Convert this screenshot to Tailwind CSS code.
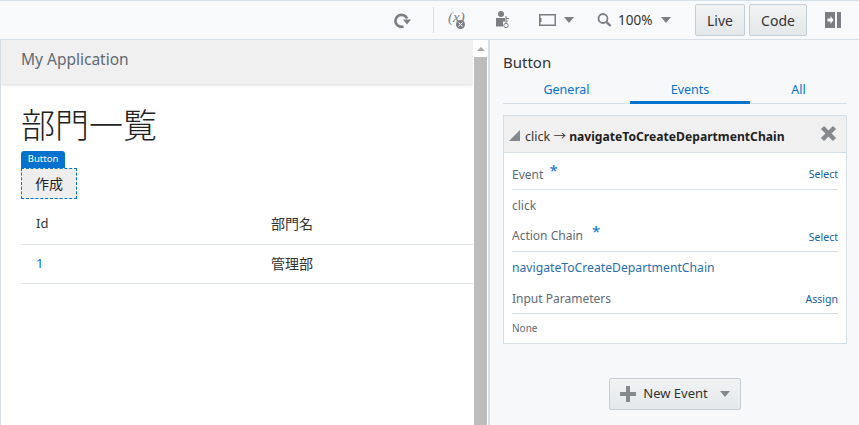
<!DOCTYPE html>
<html lang="en">
<head>
<meta charset="UTF-8" />
<title>Page Designer</title>
<script src="https://cdn.jsdelivr.net/npm/@tailwindcss/browser@4"></script>
</head>
<body class="h-[425px] w-[859px] overflow-hidden bg-white font-['Noto_Sans','Noto_Sans_CJK_JP',sans-serif] text-[#333]">
  <!-- toolbar -->
  <header class="flex h-10 items-center border-y border-t-[#d6e0e8] border-b-[#d6dfe6] bg-[#f8f9fb]">
    <div class="ml-auto flex items-center">
      <svg class="mr-[22px] h-[18px] w-[18px]" viewBox="0 0 18 18" fill="none"><path d="M10.500 15.500A6 6 0 1 1 14 7.500" stroke="#7b7f84" stroke-width="2.600"/><path d="M10 8.500h8l-4 5z" fill="#7b7f84"/></svg>
      <div class="mr-[14px] h-[26px] w-px bg-[#d6dfe6]"></div>
      <svg class="mr-[29px] h-[20px] w-[18px]" viewBox="0 0 18 20" fill="none"><text x="0" y="12" font-size="15" font-style="italic" fill="#7b7f84" font-family="Liberation Serif">(x)</text><circle cx="12.500" cy="14.500" r="4.500" fill="#7b7f84"/><path d="M10.500 12.500l4 4M14.500 12.500l-4 4" stroke="#fff"/></svg>
      <svg class="mr-[28px] h-[20px] w-[16px]" viewBox="0 0 16 20" fill="none"><circle cx="6" cy="4" r="3" fill="#7b7f84"/><path d="M1 8h9v3.500H8v5H1z" fill="#7b7f84"/><circle cx="11" cy="15.500" r="2.200" stroke="#7b7f84"/><path d="M11 13V6M11 8.500h3M11 11h2" stroke="#7b7f84"/></svg>
      <svg class="mr-[8px] h-[14px] w-[17px]" viewBox="0 0 17 14" fill="none"><rect x="0.750" y="1.750" width="15.500" height="10.500" stroke="#7b7f84" stroke-width="1.500"/><path d="M1 5h1.500v4H1z" fill="#7b7f84"/></svg>
      <div class="mr-[23px] h-0 w-0 border-x-[5px] border-t-[6px] border-x-transparent border-t-[#7b7f84]"></div>
      <svg class="mr-[6px] h-[16px] w-[15px]" viewBox="0 0 15 16" fill="none"><circle cx="6" cy="6.500" r="4.500" stroke="#7b7f84" stroke-width="1.800"/><path d="M9.500 10l4 4" stroke="#7b7f84" stroke-width="2.400"/></svg>
      <span class="mr-[10px] w-[33px] pt-[1px] text-[13.500px] leading-none">100%</span>
      <div class="mr-[24px] h-0 w-0 border-x-[5px] border-t-[6px] border-x-transparent border-t-[#7b7f84]"></div>
      <button class="mr-[4px] h-[32px] w-[50px] rounded-[2px] border border-[#c4ced7] bg-gradient-to-b from-[#f1f3f3] to-[#e4e8ea] text-[14px]">Live</button>
      <button class="mr-[18px] h-[32px] w-[58px] rounded-[2px] border border-[#c4ced7] bg-gradient-to-b from-[#f1f3f3] to-[#e4e8ea] text-[14px]">Code</button>
      <svg class="mr-[18px] h-[16px] w-[16px]" viewBox="0 0 16 16"><rect width="10" height="16" fill="#7b7f84"/><rect x="12" width="4" height="16" fill="#7b7f84"/><path d="M2.500 6.500h3V4l3 4-3 4V9.500h-3z" fill="#fff"/></svg>
    </div>
  </header>

  <div class="flex h-[385px]">
    <!-- page preview -->
    <main class="flex w-[490px] border-l border-r-2 border-l-[#d6dfe6] border-r-[#d6dfe6]">
      <div class="w-[472px] shrink-0 overflow-hidden">
        <div class="flex h-[44px] items-center bg-[#f0f0f0] pb-[4px] pl-[20px] text-[15.500px] text-[#5f6a72] shadow-[0_1px_3px_rgba(0,0,0,0.15)]">My Application</div>
        <h1 class="mt-[20px] pl-[20px] text-[34px] leading-[43px] font-light text-[#222]">部門一覧</h1>
        <div class="ml-[20px] mt-[4px] flex h-[17px] w-[44px] items-center justify-center rounded-t-[3px] bg-[#0572ce] text-[9.500px] text-white">Button</div>
        <button class="ml-[20px] block h-[31px] w-[56px] border border-dashed border-[#0572ce] bg-[#eeeeee] text-[14px] text-[#222]">作成</button>
        <table class="mt-[5px] ml-[20px] w-[452px] text-[13px] text-[#333]">
          <tbody>
            <tr class="h-[40px] border-b border-[#dfe4e8]">
              <td class="w-[250px] pl-[15px]">Id</td>
              <td class="text-[14px]">部門名</td>
            </tr>
            <tr class="h-[39px] border-b border-[#dfe4e8]">
              <td class="pl-[15px] pt-[1px] text-[#0572ce]">1</td>
              <td class="text-[14px]">管理部</td>
            </tr>
          </tbody>
        </table>
      </div>
      <div class="flex w-[15px] flex-col items-center">
        <div class="mt-[7px] h-0 w-0 border-x-[4px] border-b-[4px] border-x-transparent border-b-[#a8a8a8]"></div>
        <div class="mt-[6px] h-full w-[13px] bg-[#bdbdbd]"></div>
      </div>
    </main>

    <!-- property inspector -->
    <aside class="flex-1 bg-[#f7f8fa] pl-[13px] pr-[12px]">
      <h2 class="mt-[10px] text-[15px] leading-[24px]">Button</h2>
      <nav class="mt-[6px] flex h-[24px] border-b border-[#d6dfe6] text-[12.500px] text-[#0572ce]">
        <a class="w-[127px] pt-[1px] text-center">General</a>
        <a class="h-[24px] w-[120px] border-b-[3px] border-[#0572ce] pt-[1px] text-center">Events</a>
        <a class="flex-1 pt-[1px] text-center">All</a>
      </nav>
      <section class="mt-[11px] border border-[#d6dfe6] bg-white">
        <div class="flex h-[37px] items-center border-b border-[#d6dfe6] bg-[#f0f0f0] pl-[5px] pr-[9px]">
          <div class="mr-[5px] mt-[3px] h-0 w-0 border-b-[11px] border-l-[11px] border-b-[#85898d] border-l-transparent"></div>
          <span class="pt-[7px] text-[12.500px] text-[#333]">click → <b class="text-[12.150px] font-bold text-[#222]">navigateToCreateDepartmentChain</b></span>
          <svg class="mb-[1px] ml-auto h-[17px] w-[17px]" viewBox="0 0 17 17"><path d="M2.500 2.500l12 12M14.500 2.500l-12 12" stroke="#85898d" stroke-width="4.500"/></svg>
        </div>
        <div class="px-[8px] text-[12px] text-[#5f6a72]">
          <div class="flex h-[37px] items-center justify-between border-b border-[#d6dfe6] pt-[4px]"><span>Event <span class="relative -top-[3px] ml-[3px] text-[15px] text-[#0572ce]">*</span></span><a class="pt-[4px] text-[10.500px] text-[#145c9e]">Select</a></div>
          <div class="flex h-[31px] items-center pt-[1px]">click</div>
          <div class="flex h-[31px] items-center justify-between border-b border-[#d6dfe6]"><span class="-mt-[3px]">Action Chain <span class="relative -top-[3px] ml-[6px] text-[15px] text-[#0572ce]">*</span></span><a class="pt-[4px] text-[10.500px] text-[#145c9e]">Select</a></div>
          <div class="flex h-[32px] items-center text-[12.200px] text-[#2a6ead]">navigateToCreateDepartmentChain</div>
          <div class="flex h-[30px] items-center justify-between border-b border-[#d6dfe6]"><span>Input Parameters</span><a class="pt-[3px] text-[10.500px] text-[#145c9e]">Assign</a></div>
          <div class="flex h-[29px] items-center text-[10px]">None</div>
        </div>
      </section>
      <button class="mx-auto mt-[34px] flex h-[32px] w-[132px] items-center justify-center rounded-[2px] border border-[#c4ced7] bg-gradient-to-b from-[#f1f3f3] to-[#e4e8ea] text-[13px]">
        <svg class="mr-[7px] h-[16px] w-[16px]" viewBox="0 0 16 16"><path d="M6 0h4v6h6v4h-6v6H6v-6H0V6h6z" fill="#85898d"/></svg>
        New Event
        <span class="ml-[12px] h-0 w-0 border-x-[5px] border-t-[6px] border-x-transparent border-t-[#85898d]"></span>
      </button>
    </aside>
  </div>
</body>
</html>
